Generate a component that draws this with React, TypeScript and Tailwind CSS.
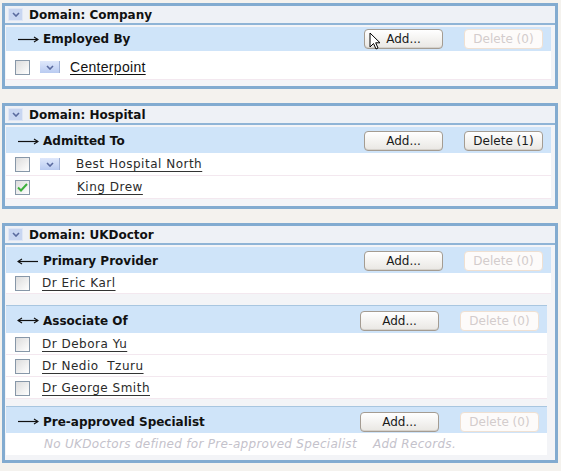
import { ReactNode } from "react";

type Row = { label: string; checked?: boolean; menu?: boolean; alt?: boolean };
type Rel = {
  dir: "right" | "left" | "both";
  label: string;
  deleteCount: number;
  rows: Row[];
  empty?: string;
  wrap: string;
  hdr: string;
  row: string;
  textCol: string;
  narrow?: boolean;
};
type Domain = { title: string; body: string; rels: Rel[] };

const domains: Domain[] = [
  {
    title: "Domain: Company",
    body: "pt-[2px] pb-[6px]",
    rels: [
      {
        dir: "right",
        label: "Employed By",
        deleteCount: 0,
        wrap: "",
        hdr: "h-[24px]",
        row: "h-[29px] pt-[4px]",
        textCol: "ml-[10px]",
        rows: [{ label: "Centerpoint", menu: true, alt: true }],
      },
    ],
  },
  {
    title: "Domain: Hospital",
    body: "pt-[2px] pb-[7px]",
    rels: [
      {
        dir: "right",
        label: "Admitted To",
        deleteCount: 1,
        wrap: "",
        hdr: "h-[26px] pt-[2px]",
        row: "h-[23px]",
        textCol: "ml-[16px]",
        rows: [
          { label: "Best Hospital North", menu: true },
          { label: "King Drew", checked: true },
        ],
      },
    ],
  },
  {
    title: "Domain: UKDoctor",
    body: "pt-[2px] pb-[5px]",
    rels: [
      {
        dir: "left",
        label: "Primary Provider",
        deleteCount: 0,
        wrap: "",
        hdr: "h-[26px] pt-[2px]",
        row: "h-[21px]",
        textCol: "ml-[12px]",
        rows: [{ label: "Dr Eric Karl" }],
      },
      {
        dir: "both",
        label: "Associate Of",
        deleteCount: 0,
        wrap: "mt-[11px] border-t border-[#a8c6e0]",
        hdr: "h-[27px] pt-[2px]",
        row: "h-[22px] pt-[1px]",
        textCol: "ml-[12px]",
        narrow: true,
        rows: [{ label: "Dr Debora Yu" }, { label: "Dr Nedio  Tzuru" }, { label: "Dr George Smith" }],
      },
      {
        dir: "right",
        label: "Pre-approved Specialist",
        deleteCount: 0,
        wrap: "mt-[7px] border-t border-[#a8c6e0]",
        hdr: "h-[26px] pt-[3px]",
        row: "h-[22px]",
        textCol: "ml-[12px]",
        narrow: true,
        rows: [],
        empty: "No UKDoctors defined for Pre-approved Specialist",
      },
    ],
  },
];

const Chevron = () => (
  <svg width="8" height="5" viewBox="0 0 8 5">
    <path d="M1 1 L4 4 L7 1" fill="none" stroke="#5a6a9e" strokeWidth="1.6" />
  </svg>
);

const Arrow = ({ dir }: { dir: Rel["dir"] }) => (
  <svg width="22" height="9" viewBox="0 0 22 9" className="shrink-0">
    <line x1="1" y1="4.5" x2="21" y2="4.5" stroke="#111" strokeWidth="1.2" />
    {dir !== "left" && <path d="M17 2 L21 4.5 L17 7" fill="none" stroke="#111" strokeWidth="1.2" />}
    {dir !== "right" && <path d="M5 2 L1 4.5 L5 7" fill="none" stroke="#111" strokeWidth="1.2" />}
  </svg>
);

const Button = ({ children, disabled }: { children: ReactNode; disabled?: boolean }) => (
  <div
    className={
      disabled
        ? "w-[79px] h-[20px] rounded-[4px] border border-[#efe0d2] bg-[#fdfbfa] text-[#d3cccc] text-[12px] flex items-center justify-center"
        : "w-[79px] h-[20px] rounded-[4px] border border-[#a49c92] bg-gradient-to-b from-white to-[#e9e7e3] text-[#1a1a1a] text-[12px] flex items-center justify-center shadow-[inset_0_-1px_0_#d6d2cc]"
    }
  >
    {children}
  </div>
);

const Checkbox = ({ checked }: { checked?: boolean }) => (
  <div className="w-[15px] h-[15px] border border-[#8797a8] bg-gradient-to-br from-[#dcdcdc] to-white flex items-center justify-center shrink-0">
    {checked && (
      <svg width="11" height="9" viewBox="0 0 11 9">
        <path d="M1 4.5 L4 7.5 L10 1" fill="none" stroke="#3cb03c" strokeWidth="2" />
      </svg>
    )}
  </div>
);

const RelSection = ({ rel, withCursor }: { rel: Rel; withCursor?: boolean }) => (
  <div className={`${rel.wrap} ${rel.narrow ? "mr-[4px]" : ""}`}>
    <div className={`${rel.hdr} bg-[#cfe4f9] flex items-center pl-[11px] pr-[8px] relative`}>
      <Arrow dir={rel.dir} />
      <span className="ml-[4px] font-bold text-[12px] text-[#111]">{rel.label}</span>
      <div className="ml-auto flex items-center gap-[21px] relative">
        <Button>Add...</Button>
        <Button disabled={rel.deleteCount === 0}>Delete ({rel.deleteCount})</Button>
        {withCursor && (
          <svg width="13" height="19" viewBox="0 0 13 19" className="absolute left-[5px] top-[3px]">
            <path d="M1 1 L1 15 L4.5 11.5 L7 17 L9 16 L6.7 10.8 L11 10.8 Z" fill="white" stroke="#000" strokeWidth="1" />
          </svg>
        )}
      </div>
    </div>
    {rel.rows.map((r) => (
      <div key={r.label} className={`${rel.row} bg-white border-b border-[#f3e8ef] flex items-center pl-[9px]`}>
        <Checkbox checked={r.checked} />
        {r.menu && (
          <div className="ml-[10px] w-[20px] h-[12px] bg-gradient-to-b from-[#dfe8fb] to-[#b9cbf1] border-r border-[#9fb0d4] flex items-center justify-center">
            <Chevron />
          </div>
        )}
        <span
          className={
            r.alt
              ? `${rel.textCol} font-['Liberation_Sans',sans-serif] text-[14px] tracking-[0.3px] text-[#111] underline underline-offset-2 whitespace-pre`
              : `${r.menu ? rel.textCol : r.checked ? "ml-[47px]" : rel.textCol} text-[12px] tracking-[0.5px] text-[#2a2a2a] underline underline-offset-[3px] decoration-[#333] whitespace-pre`
          }
        >
          {r.label}
        </span>
      </div>
    ))}
    {rel.empty && (
      <div className={`${rel.row} bg-white flex items-center pl-[38px] italic text-[12px] tracking-[0.3px] text-[#c4c2cb]`}>
        <span>{rel.empty}</span>
        <span className="ml-[16px]">Add Records.</span>
      </div>
    )}
  </div>
);

export default function App() {
  return (
    <div className="w-[561px] h-[471px] bg-[#f4f2ee] pt-[3px] pl-[2px] pr-[3px] flex flex-col gap-[14px] font-['DejaVu_Sans',sans-serif]">
      {domains.map((d, di) => (
        <div key={d.title} className="border-[3px] border-[#82abd0] bg-[#f3f4f7]">
          <div className="h-[19px] bg-[#eef1f6] flex items-center border-b-2 border-[#8fb4d6]">
            <div className="ml-[3px] w-[15px] h-[13px] bg-[#c8d6f1] border border-[#dfe7f6] flex items-center justify-center">
              <Chevron />
            </div>
            <span className="ml-[6px] font-bold text-[12px] text-[#111]">{d.title}</span>
          </div>
          <div className={`${d.body} pl-[1px] pr-[4px]`}>
            {d.rels.map((r) => (
              <RelSection key={r.label} rel={r} withCursor={di === 0} />
            ))}
          </div>
        </div>
      ))}
    </div>
  );
}
